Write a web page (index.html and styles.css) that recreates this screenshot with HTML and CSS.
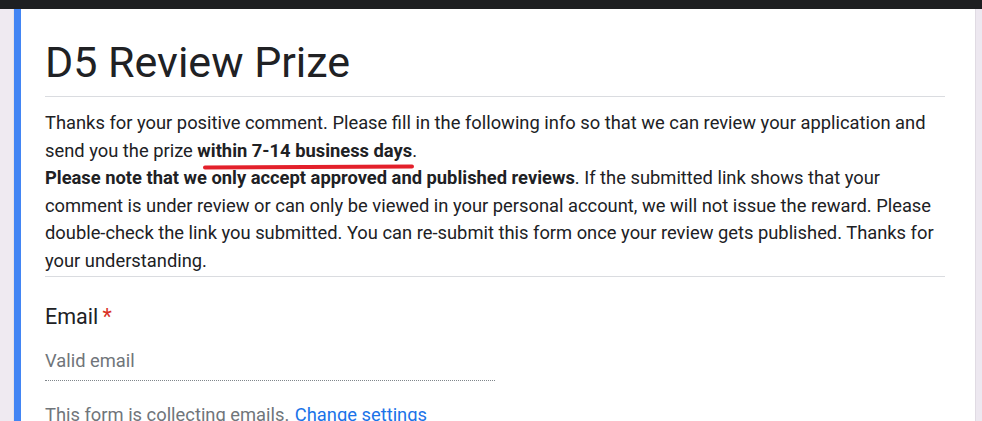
FILE: index.html
```html
<!DOCTYPE html>
<html lang="en">
<head>
<meta charset="utf-8">
<title>D5 Review Prize</title>
<link rel="stylesheet" href="styles.css">
</head>
<body>
<div class="topbar"></div>
<div class="page">
  <div class="gutter"></div>
  <main class="card">
    <h1 class="title">D5 Review Prize</h1>
    <div class="desc">
      <p>Thanks for your positive comment. Please fill in the following info so that we can review your application and send you the prize <b class="mark">within 7-14 business days</b>.</p>
      <p><b>Please note that we only accept approved and published reviews</b>. If the submitted link shows that your comment is under review or can only be viewed in your personal account, we will not issue the reward. Please double-check the link you submitted. You can re-submit this form once your review gets published. Thanks for your understanding.</p>
    </div>
    <section class="question">
      <div class="q-label">Email <span class="req">*</span></div>
      <div class="input">Valid email</div>
      <div class="note">This form is collecting emails. <a class="link" href="#">Change settings</a></div>
    </section>
  </main>
  <div class="scroll"></div>
</div>
</body>
</html>
```

FILE: styles.css
```css
* { box-sizing: border-box; }
html, body {
  margin: 0;
  height: 100%;
  overflow: hidden;
}
body {
  font-family: Roboto, "Liberation Sans", Arial, sans-serif;
  color: #202124;
  background: #efeaf1;
  display: flex;
  flex-direction: column;
}
.topbar {
  height: 9px;
  background: #1e1f21;
  flex: none;
}
.page {
  flex: 1;
  display: flex;
  min-height: 0;
}
.gutter {
  width: 14px;
  flex: none;
  background: #efeaf1;
  border-right: 1px solid #e6e1e8;
}
.card {
  flex: 1;
  background: #ffffff;
  border-left: 7px solid #4285f4;
  padding: 28px 30px 0 24px;
  min-width: 0;
}
.scroll {
  width: 7px;
  flex: none;
  background: #ede8f0;
  border-left: 1px solid #e0dbe3;
}
.title {
  margin: 0;
  font-size: 43px;
  font-weight: 400;
  line-height: 50px;
  color: #202124;
  padding-bottom: 9px;
  border-bottom: 1px solid #dadce0;
}
.desc {
  padding: 12px 0 2px;
  border-bottom: 1px solid #dadce0;
  font-size: 18.33px;
  line-height: 27.5px;
  color: #202124;
}
.desc p { margin: 0; }
.desc b { font-weight: 700; }
.mark {
  position: relative;
}
.mark::after {
  content: "";
  position: absolute;
  left: 6px;
  right: -2px;
  bottom: -8px;
  height: 4px;
  border-radius: 2px;
  background: #e3202b;
  transform: rotate(-0.3deg);
}
.question {
  padding-top: 24px;
}
.q-label {
  font-size: 21.5px;
  line-height: 32px;
  font-weight: 400;
  color: #202124;
}
.req {
  color: #d93025;
  margin-left: -1px;
}
.input {
  margin-top: 14px;
  width: 450px;
  font-size: 18.33px;
  line-height: 28px;
  color: #70757a;
  padding-bottom: 5px;
  border-bottom: 1px dotted #80868b;
}
.note {
  margin-top: 20px;
  font-size: 18.33px;
  line-height: 28px;
  color: #70757a;
}
.link {
  color: #1a73e8;
  text-decoration: none;
  margin-left: 1px;
}
```
